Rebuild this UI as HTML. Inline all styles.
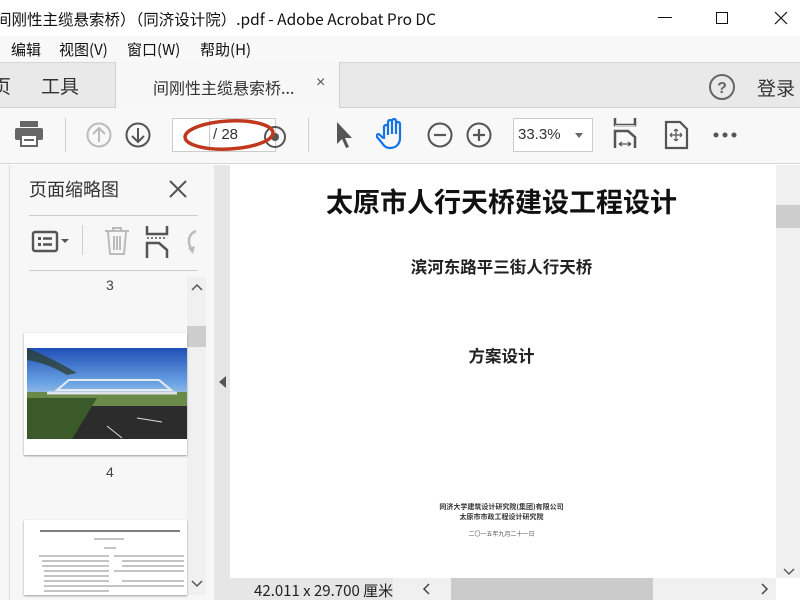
<!DOCTYPE html>
<html><head><meta charset="utf-8"><style>
*{margin:0;padding:0;box-sizing:border-box}
body{width:800px;height:600px;overflow:hidden;position:relative;background:#fff;font-family:"Liberation Sans","Noto Sans CJK SC",sans-serif;color:#222}
.a{position:absolute}
.cjk{font-family:"Noto Sans CJK SC","WenQuanYi Zen Hei",sans-serif}
.m{position:absolute;top:39px;font-size:15px;color:#111;font-family:"Noto Sans CJK SC",sans-serif;white-space:nowrap}
</style></head><body>
<!-- title bar -->
<div class="a cjk" style="left:-4px;top:8px;font-size:15.5px;color:#111;white-space:nowrap">间刚性主缆悬索桥）（同济设计院）.pdf - Adobe Acrobat Pro DC</div>
<div class="a" style="left:658px;top:17px;width:14px;height:1px;background:#111"></div>
<div class="a" style="left:716px;top:12px;width:12px;height:12px;border:1px solid #111"></div>
<svg class="a" style="left:774px;top:11px" width="14" height="14"><path d="M1 1L13 13M13 1L1 13" stroke="#111" stroke-width="1.2"/></svg>
<!-- menu -->
<div class="a" style="left:0;top:36px;width:800px;height:26px;background:#f8f8f8"></div>
<div class="m" style="left:11px">编辑</div>
<div class="m" style="left:59px">视图(V)</div>
<div class="m" style="left:127px">窗口(W)</div>
<div class="m" style="left:200px">帮助(H)</div>
<!-- tab bar -->
<div class="a" style="left:0;top:62px;width:800px;height:46px;background:#e9e9e9;border-top:1px solid #d6d6d6;border-bottom:1px solid #d0d0d0"></div>
<div class="a" style="left:115px;top:62px;width:225px;height:46px;background:#f7f7f7;border-left:1px solid #d0d0d0;border-right:1px solid #d0d0d0"></div>
<div class="a cjk" style="left:-8px;top:72px;font-size:19px;color:#333">页</div>
<div class="a cjk" style="left:41px;top:72px;font-size:19px;color:#333">工具</div>
<div class="a cjk" style="left:153px;top:75px;font-size:16px;color:#333">间刚性主缆悬索桥...</div>
<div class="a" style="left:316px;top:74px;font-size:16px;color:#555">×</div>
<svg class="a" style="left:708px;top:73px" width="28" height="28"><circle cx="14" cy="14" r="12" fill="none" stroke="#666" stroke-width="2"/><text x="14" y="20" text-anchor="middle" font-size="16" font-weight="bold" fill="#666" font-family="Liberation Sans">?</text></svg>
<div class="a cjk" style="left:757px;top:74px;font-size:19px;color:#333">登录</div>
<!-- toolbar -->
<div class="a" style="left:0;top:108px;width:800px;height:56px;background:#f8f8f8;border-bottom:1px solid #d6d6d6"></div>
<svg class="a" style="left:14px;top:120px" width="32" height="28"><rect x="6" y="1" width="18" height="6" fill="#666"/><rect x="1" y="8" width="28" height="12" rx="2" fill="#666"/><rect x="7" y="15" width="16" height="11" fill="#fff" stroke="#666" stroke-width="2"/><rect x="10" y="19" width="10" height="2" fill="#666"/></svg>
<div class="a" style="left:65px;top:118px;width:1px;height:34px;background:#d0d0d0"></div>
<svg class="a" style="left:86px;top:121px" width="70" height="28"><circle cx="13" cy="14" r="11.5" fill="none" stroke="#bbb" stroke-width="2"/><path d="M13 21V7M7 13l6-6 6 6" fill="none" stroke="#bbb" stroke-width="2"/><circle cx="52" cy="14" r="11.5" fill="none" stroke="#555" stroke-width="2"/><path d="M52 7v14M46 15l6 6 6-6" fill="none" stroke="#555" stroke-width="2"/></svg>
<div class="a" style="left:172px;top:118px;width:104px;height:34px;background:#fff;border:1px solid #ccc"></div>
<div class="a" style="left:209px;top:118px;width:1px;height:34px;background:#ccc"></div>
<svg class="a" style="left:262px;top:124px" width="26" height="26"><circle cx="13" cy="13" r="10" fill="none" stroke="#555" stroke-width="2"/><circle cx="13" cy="13" r="4" fill="#555"/></svg>
<svg class="a" style="left:182px;top:114px" width="100" height="42"><ellipse cx="47" cy="21" rx="44" ry="14" fill="none" stroke="#c0391f" stroke-width="3.5" transform="rotate(-3 47 21)"/></svg>
<div class="a" style="left:213px;top:126px;font-size:15px;color:#333">/ 28</div>
<div class="a" style="left:308px;top:118px;width:1px;height:34px;background:#d0d0d0"></div>
<svg class="a" style="left:334px;top:120px" width="22" height="30"><path d="M3 2v22l5-5 4 9 3-1-4-9h7z" fill="#555"/></svg>
<svg class="a" style="left:376px;top:117px" width="32" height="34"><path d="M8 22V10a2 2 0 014 0v8V5a2 2 0 014 0v12V4a2 2 0 014 0v13V7a2 2 0 014 0v14c0 6-4 10-10 10-4 0-6-2-8-5l-5-6c-1-2 1-4 3-2l3 3" fill="none" stroke="#1473e6" stroke-width="2.2"/></svg>
<svg class="a" style="left:426px;top:121px" width="70" height="28"><circle cx="14" cy="14" r="11.5" fill="none" stroke="#555" stroke-width="2"/><path d="M8 14h12" stroke="#555" stroke-width="2.2"/><circle cx="53" cy="14" r="11.5" fill="none" stroke="#555" stroke-width="2"/><path d="M47 14h12M53 8v12" stroke="#555" stroke-width="2.2"/></svg>
<div class="a" style="left:513px;top:118px;width:80px;height:34px;background:#fff;border:1px solid #ccc"></div>
<div class="a" style="left:518px;top:126px;font-size:15px;color:#333">33.3%</div>
<div class="a" style="left:575px;top:133px;width:0;height:0;border-left:4px solid transparent;border-right:4px solid transparent;border-top:5px solid #666"></div>
<svg class="a" style="left:612px;top:118px" width="28" height="34"><path d="M3 0v7h20V0" fill="none" stroke="#555" stroke-width="2.5"/><path d="M3 8h20" stroke="#ccc" stroke-width="2"/><path d="M3 30V13h13l7 6v11" fill="none" stroke="#555" stroke-width="2.5"/><path d="M7 26h12M7 26l3-2M7 26l3 2M19 26l-3-2M19 26l-3 2" stroke="#555" stroke-width="1.3"/></svg>
<svg class="a" style="left:664px;top:120px" width="26" height="30"><path d="M2 2h14l7 7v19H2z" fill="none" stroke="#555" stroke-width="2.2"/><path d="M12 9v12M6 15h12M12 9l-2 2M12 9l2 2M12 21l-2-2M12 21l2-2M6 15l2-2M6 15l2 2M18 15l-2-2M18 15l-2 2" stroke="#555" stroke-width="1.2"/></svg>
<svg class="a" style="left:712px;top:130px" width="28" height="10"><circle cx="4" cy="5" r="2.5" fill="#555"/><circle cx="13" cy="5" r="2.5" fill="#555"/><circle cx="22" cy="5" r="2.5" fill="#555"/></svg>
<!-- left panel -->
<div class="a" style="left:0;top:165px;width:214px;height:435px;background:#f7f7f7"></div>
<div class="a" style="left:9px;top:165px;width:1px;height:435px;background:#ddd"></div>
<div class="a" style="left:214px;top:165px;width:16px;height:435px;background:#e6e6e6"></div>
<div class="a" style="left:219px;top:376px;width:0;height:0;border-top:6px solid transparent;border-bottom:6px solid transparent;border-right:7px solid #555"></div>
<div class="a cjk" style="left:29px;top:176px;font-size:18px;color:#333">页面缩略图</div>
<svg class="a" style="left:168px;top:179px" width="20" height="20"><path d="M2 2L18 18M18 2L2 18" stroke="#555" stroke-width="2"/></svg>
<div class="a" style="left:29px;top:215px;width:169px;height:1px;background:#ccc"></div>
<div class="a" style="left:29px;top:270px;width:169px;height:1px;background:#ccc"></div>
<svg class="a" style="left:31px;top:229px" width="40" height="26"><rect x="2" y="3" width="24" height="19" rx="2" fill="none" stroke="#555" stroke-width="2.4"/><rect x="7" y="8" width="3" height="3" fill="#555"/><rect x="7" y="14" width="3" height="3" fill="#555"/><path d="M12 9.5h9M12 15.5h9" stroke="#555" stroke-width="2.4"/><path d="M30 10h8l-4 4z" fill="#555"/></svg>
<div class="a" style="left:82px;top:225px;width:1px;height:30px;background:#ccc"></div>
<svg class="a" style="left:103px;top:226px" width="28" height="30"><path d="M2 5h24M10 5V2h8v3M5 6l2 22h14l2-22M11 10v14M14 10v14M17 10v14" fill="none" stroke="#bbb" stroke-width="2"/></svg>
<svg class="a" style="left:145px;top:226px" width="24" height="32"><path d="M2 0v8h20V0M2 32V17h12l8 7v8" fill="none" stroke="#555" stroke-width="2.5"/><path d="M2 12h20" stroke="#555" stroke-width="1.5" stroke-dasharray="2 2"/></svg>
<svg class="a" style="left:184px;top:228px" width="16" height="28"><path d="M12 3C4 6 3 15 8 22" fill="none" stroke="#bbb" stroke-width="2.5"/><path d="M4 20l5 6 2-8z" fill="#bbb"/></svg>
<div class="a" style="left:106px;top:277px;font-size:14px;color:#444">3</div>
<div class="a" style="left:187px;top:277px;width:19px;height:318px;background:#f0f0f0"></div>
<svg class="a" style="left:191px;top:283px" width="12" height="10"><path d="M1 7l5-5 5 5" fill="none" stroke="#555" stroke-width="1.5"/></svg>
<svg class="a" style="left:191px;top:579px" width="12" height="10"><path d="M1 2l5 5 5-5" fill="none" stroke="#555" stroke-width="1.5"/></svg>
<div class="a" style="left:187px;top:326px;width:19px;height:21px;background:#cdcdcd"></div>
<div class="a" style="left:24px;top:333px;width:163px;height:122px;background:#fff;box-shadow:0 1px 2px #999"></div>
<svg class="a" style="left:27px;top:348px" width="160" height="91"><defs><linearGradient id="s" x1="0" y1="0" x2="0" y2="1"><stop offset="0" stop-color="#1f4fb6"/><stop offset="0.6" stop-color="#6aa3e4"/><stop offset="1" stop-color="#c4d4e2"/></linearGradient></defs><rect width="160" height="58" fill="url(#s)"/><rect y="56" width="160" height="35" fill="#2c2c2c"/><path d="M0 44h160v14H0z" fill="#6a8a4a"/><path d="M0 50h70l-25 41H0z" fill="#3a5a2a"/><path d="M30 42l12-10h90l12 10z" fill="none" stroke="#e6ebef" stroke-width="2"/><path d="M20 45h130" stroke="#dde3e8" stroke-width="3"/><path d="M80 78l15 12M110 70l25 4" stroke="#ddd" stroke-width="1"/><path d="M0 0q25 10 50 25l-10 2q-20-12-40-15z" fill="#2a3a20" opacity=".7"/></svg>
<div class="a" style="left:106px;top:464px;font-size:14px;color:#444">4</div>
<div class="a" style="left:24px;top:520px;width:163px;height:75px;background:#fff;box-shadow:0 1px 2px #999"></div>
<svg class="a" style="left:34px;top:528px" width="150" height="67"><path d="M6 3h140" stroke="#000" stroke-width="1"/><g stroke="#888" stroke-width="1"><path d="M60 11h30M70 20h12"/><path d="M5 28h70M80 28h70M8 33h67M88 33h62M8 38h67M88 38h62M10 43h65M80 43h70M10 48h65M88 53h62M10 53h65M75 58h75M10 58h65M10 63h65"/></g></svg>
<!-- document area -->
<div class="a" style="left:230px;top:165px;width:546px;height:413px;background:#fff"></div>
<div class="a cjk" style="left:230px;top:181px;width:543px;text-align:center;font-size:27px;font-weight:bold;color:#111">太原市人行天桥建设工程设计</div>
<div class="a cjk" style="left:230px;top:254px;width:543px;text-align:center;font-size:16.5px;font-weight:bold;color:#222">滨河东路平三街人行天桥</div>
<div class="a cjk" style="left:230px;top:343px;width:543px;text-align:center;font-size:16.5px;font-weight:bold;color:#222">方案设计</div>
<div class="a cjk" style="left:230px;top:502px;width:543px;text-align:center;font-size:7px;line-height:10px;font-weight:bold;color:#333">同济大学建筑设计研究院(集团)有限公司<br>太原市市政工程设计研究院</div>
<div class="a cjk" style="left:230px;top:529px;width:543px;text-align:center;font-size:6px;color:#555">二〇一五年九月二十一日</div>
<!-- right scrollbar -->
<div class="a" style="left:776px;top:165px;width:24px;height:413px;background:#f0f0f0"></div>
<div class="a" style="left:776px;top:205px;width:24px;height:23px;background:#cdcdcd"></div>
<svg class="a" style="left:783px;top:568px" width="12" height="8"><path d="M1 1l5 5 5-5" fill="none" stroke="#555" stroke-width="1.4"/></svg>
<!-- bottom -->
<div class="a" style="left:230px;top:578px;width:546px;height:22px;background:#f0f0f0"></div>
<div class="a" style="left:230px;top:578px;width:163px;height:22px;background:#e6e6e6"></div>
<div class="a cjk" style="left:254px;top:580px;font-size:15px;color:#222">42.011 x 29.700 厘米</div>
<div class="a" style="left:451px;top:578px;width:202px;height:22px;background:#cbcbcb"></div>
<svg class="a" style="left:422px;top:583px" width="10" height="12"><path d="M7 1L2 6l5 5" fill="none" stroke="#444" stroke-width="1.5"/></svg>
<svg class="a" style="left:759px;top:583px" width="10" height="12"><path d="M3 1l5 5-5 5" fill="none" stroke="#444" stroke-width="1.5"/></svg>
<div class="a" style="left:776px;top:578px;width:24px;height:22px;background:#fff"></div>
</body></html>
